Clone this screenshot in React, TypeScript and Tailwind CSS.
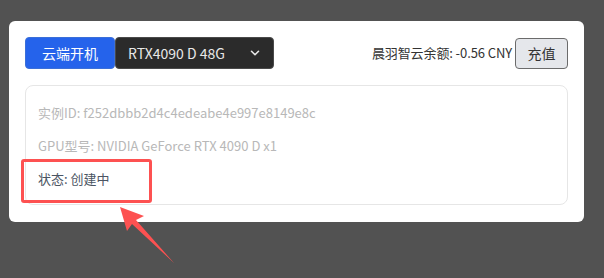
import { ChevronDown } from 'lucide-react';

const info = [
  { label: '实例ID', value: 'f252dbbb2d4c4edeabe4e997e8149e8c', muted: true },
  { label: 'GPU型号', value: 'NVIDIA GeForce RTX 4090 D x1', muted: true },
  { label: '状态', value: '创建中', muted: false },
];

export default function App() {
  return (
    <div className="relative h-[278px] w-[604px] overflow-hidden bg-[#525252] pl-[9px] pt-[21px] font-['Noto_Sans_CJK_SC',sans-serif]">
      <div className="relative w-[575px] rounded-md bg-white px-4 pb-[17px] pt-4">
        {/* header */}
        <div className="flex h-8 items-center justify-between">
          <div className="flex h-8">
            <button className="w-[90px] rounded-[4px] border border-[#3b6fd8] bg-[#2563eb] text-[14px] text-white">
              云端开机
            </button>
            <div className="flex w-[159px] items-center justify-between rounded-[4px] border border-[#4a4a4a] bg-[#2b2b2b] pl-3 pr-[11px] text-[14px] text-[#e8e8e8]">
              <span>RTX4090 D 48G</span>
              <ChevronDown size={14} strokeWidth={2.75} />
            </div>
          </div>
          <div className="flex items-center">
            <span className="mr-[3px] text-[13px] tracking-[-0.1px] text-[#333]">晨羽智云余额: -0.56 CNY</span>
            <button className="h-[31px] w-[53px] rounded-[4px] border border-[#6b6b6b] bg-[#e5e7eb] text-[14px] text-[#333]">
              充值
            </button>
          </div>
        </div>

        {/* instance info */}
        <div className="mt-4 flex h-[120px] flex-col gap-[13px] rounded-lg border border-[#e6e6e6] pl-3 pt-[17px] text-[13px]">
          {info.map((row) => (
            <div key={row.label} className={`h-5 leading-5 ${row.muted ? 'text-[#b8b8b8]' : 'text-[#4b5563]'}`}>
              {row.label}: {row.value}
            </div>
          ))}
        </div>

        {/* annotation box */}
        <div className="absolute left-[12px] top-[138px] h-[44px] w-[131px] rounded-[3px] border-[3px] border-[#fd5151]" />
      </div>

      {/* annotation arrow */}
      <svg className="absolute left-0 top-0" width="604" height="278" viewBox="0 0 604 278">
        <polygon
          points="120,207 144,216 136,220 174,263 132,224 127,231"
          fill="#fd5151"
        />
      </svg>
    </div>
  );
}
